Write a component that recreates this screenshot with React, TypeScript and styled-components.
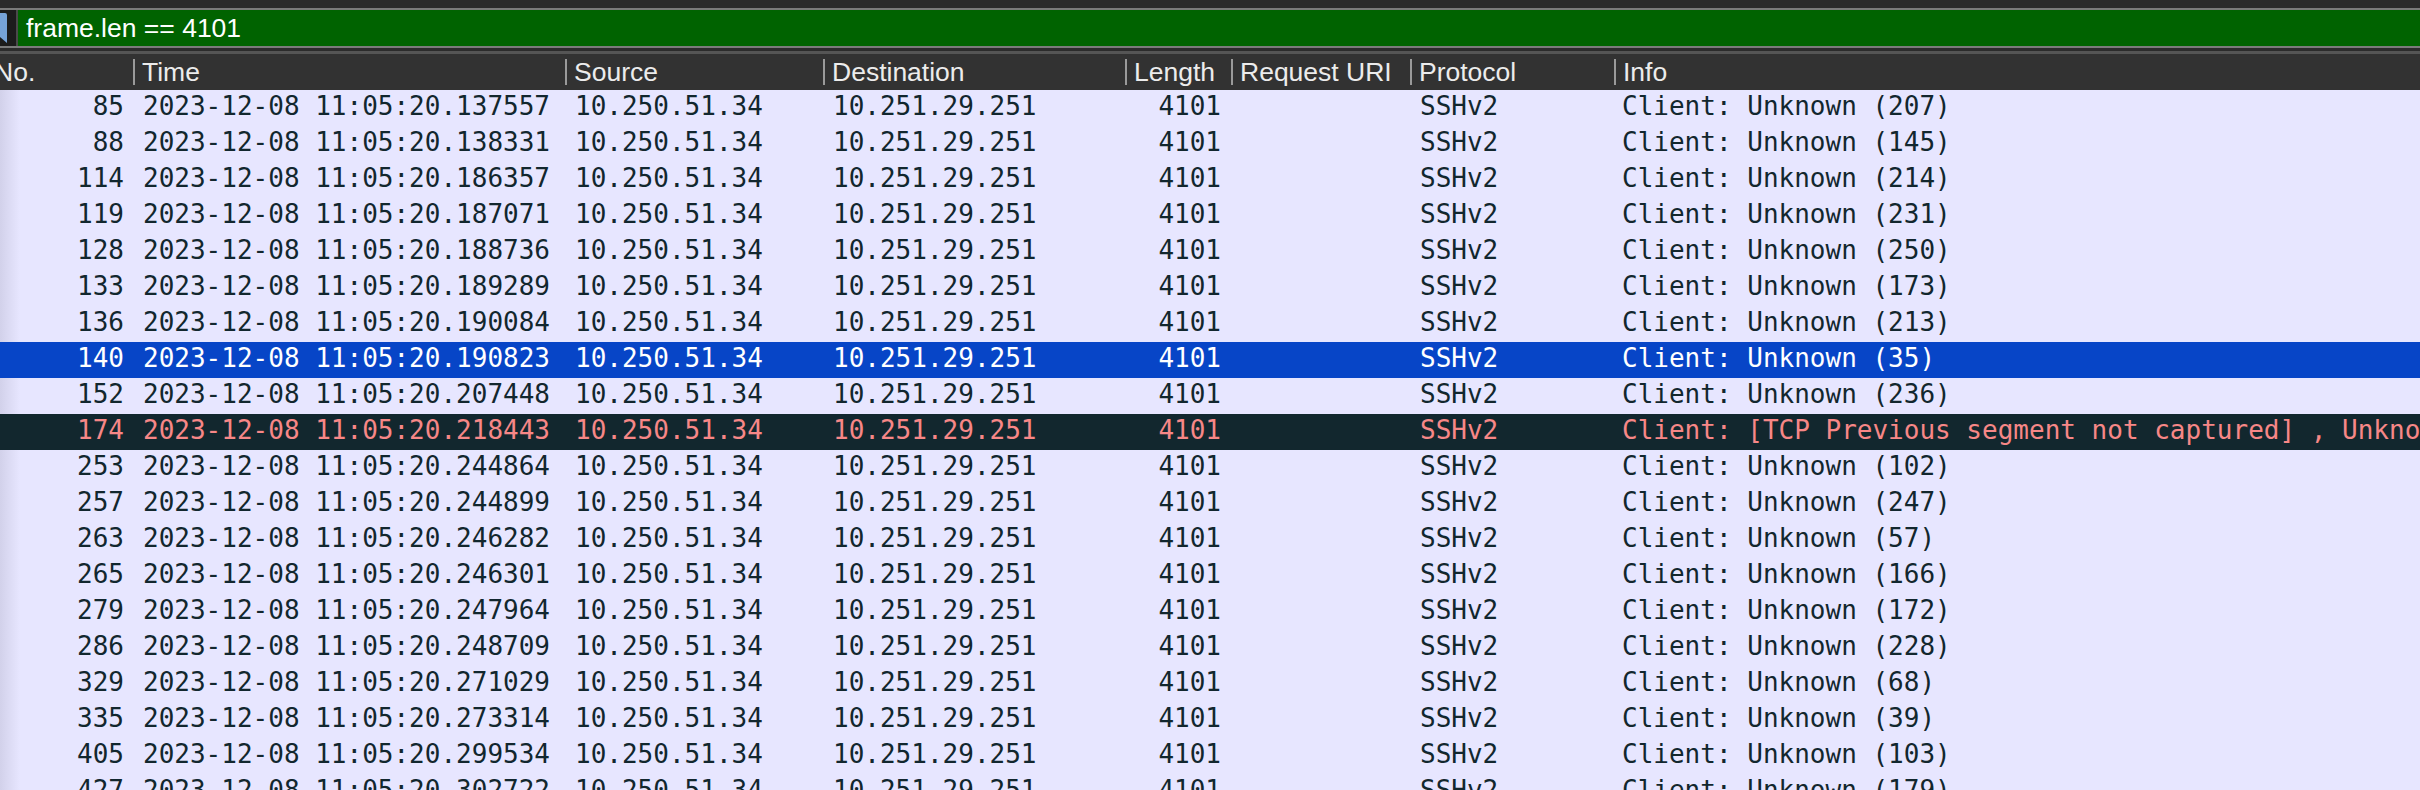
import React from 'react';
import styled, { createGlobalStyle, css } from 'styled-components';

const GlobalStyle = createGlobalStyle`
  html, body { margin: 0; padding: 0; background: #e7e6ff; overflow: hidden; }
  #root { width: 2420px; height: 790px; overflow: hidden; }
`;

const COLS = '133px 432px 258px 302px 106px 179px 204px 1fr';

const Window = styled.div`
  display: flex;
  flex-direction: column;
  width: 2420px;
  height: 790px;
  overflow: hidden;
  background: #e7e6ff;
`;

const FilterStrip = styled.div`
  background: #2b2b2b;
  padding: 8px 0 3px;
  border-bottom: 3px solid #555555;
`;

const FilterRow = styled.div`
  display: flex;
  height: 36px;
  border-top: 2px solid #7b7b7b;
  border-bottom: 2px solid #7b7b7b;
`;

const BookmarkSlot = styled.div`
  width: 16px;
  flex: none;
  background: #1c1c1c;
  border-right: 2px solid #4a4a4a;
  overflow: hidden;
  display: flex;
  align-items: center;
`;

const BookmarkIcon = styled.svg`
  flex: none;
  margin-left: -9px;
  width: 16px;
  height: 30px;
`;

const FilterField = styled.div`
  flex: 1;
  display: flex;
  align-items: center;
  padding-left: 8px;
  background: #006300;
  color: #ffffff;
  font-family: 'Liberation Sans', Arial, sans-serif;
  font-size: 26.5px;
  white-space: nowrap;
`;

const HeaderRow = styled.div`
  display: grid;
  grid-template-columns: ${COLS};
  height: 36px;
  background: #323232;
  flex: none;
`;

const HeaderCell = styled.div<{ $first?: boolean }>`
  display: flex;
  align-items: center;
  gap: 7px;
  min-width: 0;
  overflow: hidden;
  white-space: nowrap;
  color: #ececec;
  font-family: 'Liberation Sans', Arial, sans-serif;
  font-size: 26.5px;
  ${(p) =>
    p.$first &&
    css`
      margin-left: -6px;
    `}
`;

const HeaderSep = styled.span`
  flex: none;
  width: 2px;
  height: 26px;
  background: #9a9a9a;
`;

const Body = styled.div`
  flex: 1;
  overflow: hidden;
`;

type Variant = 'normal' | 'selected' | 'bad';

const Row = styled.div<{ $variant: Variant }>`
  display: grid;
  grid-template-columns: ${COLS};
  height: 36px;
  ${(p) =>
    p.$variant === 'selected'
      ? css`
          background: #0745c7;
          color: #ffffff;
        `
      : p.$variant === 'bad'
      ? css`
          background: #12272e;
          color: #f78787;
        `
      : css`
          background: linear-gradient(to right, #d2d1ea 0px, #e7e6ff 20px);
          color: #12272e;
        `}
`;

const Cell = styled.div<{ $align?: 'left' | 'right'; $pad?: number }>`
  min-width: 0;
  overflow: hidden;
  white-space: nowrap;
  font-family: 'DejaVu Sans Mono', 'Liberation Mono', monospace;
  font-size: 26px;
  line-height: 32px;
  padding: 0 ${(p) => p.$pad ?? 10}px 4px;
  text-align: ${(p) => p.$align ?? 'left'};
`;

type Packet = { no: number; time: string; info: string; variant?: Variant };

const packets: Packet[] = [
  { no: 85, time: '137557', info: 'Client: Unknown (207)' },
  { no: 88, time: '138331', info: 'Client: Unknown (145)' },
  { no: 114, time: '186357', info: 'Client: Unknown (214)' },
  { no: 119, time: '187071', info: 'Client: Unknown (231)' },
  { no: 128, time: '188736', info: 'Client: Unknown (250)' },
  { no: 133, time: '189289', info: 'Client: Unknown (173)' },
  { no: 136, time: '190084', info: 'Client: Unknown (213)' },
  { no: 140, time: '190823', info: 'Client: Unknown (35)', variant: 'selected' },
  { no: 152, time: '207448', info: 'Client: Unknown (236)' },
  {
    no: 174,
    time: '218443',
    info: 'Client: [TCP Previous segment not captured] , Unknown (74)',
    variant: 'bad',
  },
  { no: 253, time: '244864', info: 'Client: Unknown (102)' },
  { no: 257, time: '244899', info: 'Client: Unknown (247)' },
  { no: 263, time: '246282', info: 'Client: Unknown (57)' },
  { no: 265, time: '246301', info: 'Client: Unknown (166)' },
  { no: 279, time: '247964', info: 'Client: Unknown (172)' },
  { no: 286, time: '248709', info: 'Client: Unknown (228)' },
  { no: 329, time: '271029', info: 'Client: Unknown (68)' },
  { no: 335, time: '273314', info: 'Client: Unknown (39)' },
  { no: 405, time: '299534', info: 'Client: Unknown (103)' },
  { no: 427, time: '302722', info: 'Client: Unknown (179)' },
];

const headers = ['Time', 'Source', 'Destination', 'Length', 'Request URI', 'Protocol', 'Info'];

export default function App() {
  return (
    <Window>
      <GlobalStyle />
      <FilterStrip>
        <FilterRow>
          <BookmarkSlot>
            <BookmarkIcon viewBox="0 0 16 30">
              <path d="M2 0 H14 Q16 0 16 2 V30 L8 23 L0 30 V2 Q0 0 2 0 Z" fill="#76a3d8" />
            </BookmarkIcon>
          </BookmarkSlot>
          <FilterField>frame.len == 4101</FilterField>
        </FilterRow>
      </FilterStrip>
      <HeaderRow>
        <HeaderCell $first>No.</HeaderCell>
        {headers.map((h) => (
          <HeaderCell key={h}>
            <HeaderSep />
            {h}
          </HeaderCell>
        ))}
      </HeaderRow>
      <Body>
        {packets.map((p) => (
          <Row key={p.no} $variant={p.variant ?? 'normal'}>
            <Cell $align="right" $pad={9}>
              {p.no}
            </Cell>
            <Cell>2023-12-08 11:05:20.{p.time}</Cell>
            <Cell>10.250.51.34</Cell>
            <Cell>10.251.29.251</Cell>
            <Cell $align="right">4101</Cell>
            <Cell />
            <Cell>SSHv2</Cell>
            <Cell $pad={8}>{p.info}</Cell>
          </Row>
        ))}
      </Body>
    </Window>
  );
}
